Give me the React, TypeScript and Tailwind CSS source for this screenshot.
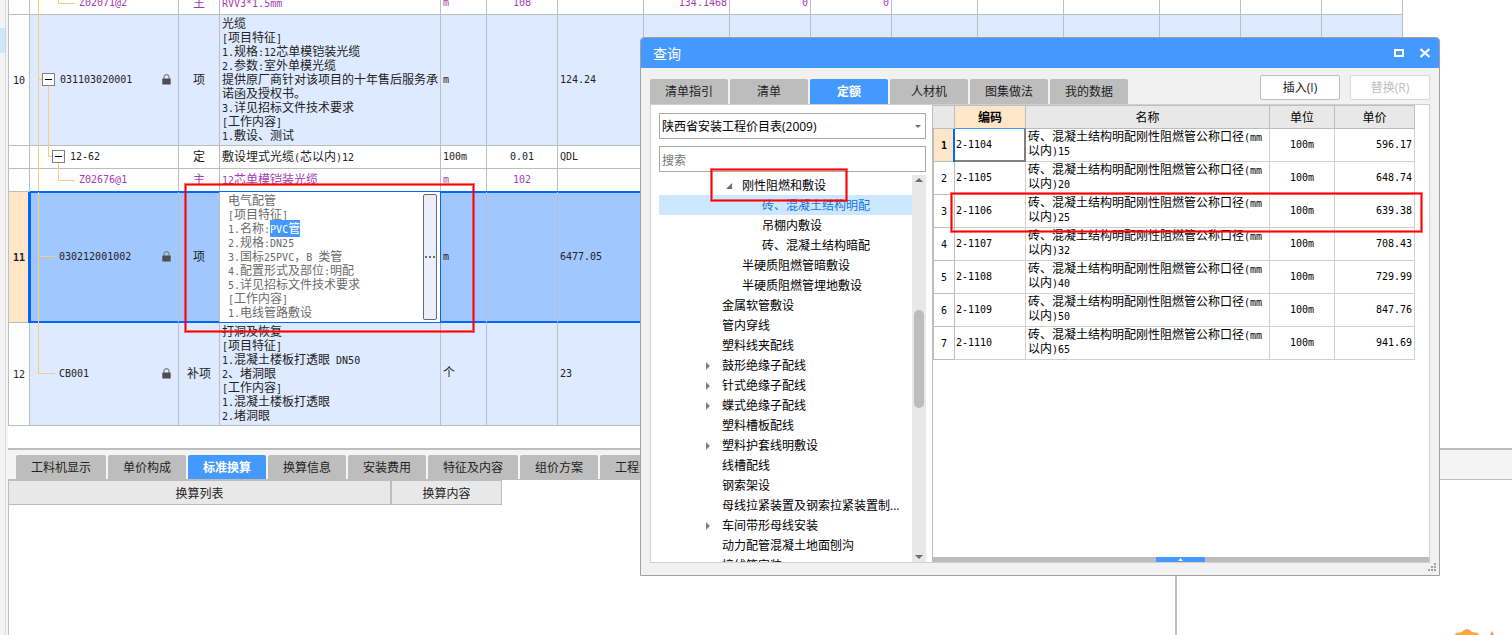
import { ReactNode } from 'react';
import { clsx } from 'clsx';

interface BillRow {
  no?: string;
  code: string;
  type: string;
  name: string[];
  unit: string;
  qty?: string;
  expr?: string;
  extra?: string[];
  kind: 'item' | 'quota' | 'material';
  height: string;
  locked?: boolean;
  editing?: boolean;
}

const billRows: BillRow[] = [
  { code: 'Z02071@2', type: '主', name: ['RVV3*1.5mm'], unit: 'm', qty: '108', extra: ['134.1468', '0', '0'], kind: 'material', height: 'h-[23px]' },
  {
    no: '10',
    code: '031103020001',
    type: '项',
    name: [
      '光缆',
      '[项目特征]',
      '1.规格:12芯单模铠装光缆',
      '2.参数:室外单模光缆',
      '提供原厂商针对该项目的十年售后服务承',
      '诺函及授权书。',
      '3.详见招标文件技术要求',
      '[工作内容]',
      '1.敷设、测试',
    ],
    unit: 'm',
    expr: '124.24',
    kind: 'item',
    height: 'h-[131px]',
    locked: true,
  },
  { code: '12-62', type: '定', name: ['敷设埋式光缆(芯以内)12'], unit: '100m', qty: '0.01', expr: 'QDL', kind: 'quota', height: 'h-[23px]' },
  { code: 'Z02676@1', type: '主', name: ['12芯单模铠装光缆'], unit: 'm', qty: '102', kind: 'material', height: 'h-[23px]' },
  { no: '11', code: '030212001002', type: '项', name: [], unit: 'm', expr: '6477.05', kind: 'item', height: 'h-[131px]', locked: true, editing: true },
  {
    no: '12',
    code: 'CB001',
    type: '补项',
    name: ['打洞及恢复', '[项目特征]', '1.混凝土楼板打透眼 DN50', '2、堵洞眼', '[工作内容]', '1.混凝土楼板打透眼', '2.堵洞眼'],
    unit: '个',
    expr: '23',
    kind: 'item',
    height: 'h-[103px]',
    locked: true,
  },
];

const editorLines = ['2.规格:DN25', '3.国标25PVC，B 类管', '4.配置形式及部位:明配', '5.详见招标文件技术要求', '[工作内容]', '1.电线管路敷设'];

const detailTabs = ['工料机显示', '单价构成', '标准换算', '换算信息', '安装费用', '特征及内容', '组价方案', '工程量明细'];

const queryTabs = ['清单指引', '清单', '定额', '人材机', '图集做法', '我的数据'];

interface TreeNode {
  label: string;
  level: 1 | 2 | 3;
  state?: 'open' | 'closed';
  selected?: boolean;
}

const treeNodes: TreeNode[] = [
  { label: '刚性阻燃和敷设', level: 2, state: 'open' },
  { label: '砖、混凝土结构明配', level: 3, selected: true },
  { label: '吊棚内敷设', level: 3 },
  { label: '砖、混凝土结构暗配', level: 3 },
  { label: '半硬质阻燃管暗敷设', level: 2 },
  { label: '半硬质阻燃管埋地敷设', level: 2 },
  { label: '金属软管敷设', level: 1 },
  { label: '管内穿线', level: 1 },
  { label: '塑料线夹配线', level: 1 },
  { label: '鼓形绝缘子配线', level: 1, state: 'closed' },
  { label: '针式绝缘子配线', level: 1, state: 'closed' },
  { label: '蝶式绝缘子配线', level: 1, state: 'closed' },
  { label: '塑料槽板配线', level: 1 },
  { label: '塑料护套线明敷设', level: 1, state: 'closed' },
  { label: '线槽配线', level: 1 },
  { label: '钢索架设', level: 1 },
  { label: '母线拉紧装置及钢索拉紧装置制...', level: 1 },
  { label: '车间带形母线安装', level: 1, state: 'closed' },
  { label: '动力配管混凝土地面刨沟', level: 1 },
  { label: '接线箱安装', level: 1 },
];

const quotas = [
  { code: '2-1104', size: '15', price: '596.17' },
  { code: '2-1105', size: '20', price: '648.74' },
  { code: '2-1106', size: '25', price: '639.38' },
  { code: '2-1107', size: '32', price: '708.43' },
  { code: '2-1108', size: '40', price: '729.99' },
  { code: '2-1109', size: '50', price: '847.76' },
  { code: '2-1110', size: '65', price: '941.69' },
];

// Half-width runs are set in a monospace face so two of them fill one hanzi.
function Mono({ children }: { children: string }) {
  return (
    <>
      {children.split(/([\x20-\x7e]+)/).map((run, i) =>
        i % 2 ? (
          <span key={i} className="whitespace-pre font-['DejaVu_Sans_Mono',monospace] text-[10px] leading-none">
            {run}
          </span>
        ) : (
          run
        ),
      )}
    </>
  );
}

function LockIcon() {
  return (
    <svg width="9" height="11" viewBox="0 0 9 11" className="shrink-0">
      <path d="M2 5V3.2a2.5 2.5 0 0 1 5 0V5" fill="none" stroke="#808080" strokeWidth="1.2" />
      <rect x="0.3" y="4.6" width="8.4" height="6" rx="0.6" fill="#4f4f4f" />
    </svg>
  );
}

function Toggle() {
  return (
    <button aria-label="折叠" className="relative flex h-[13px] w-[13px] shrink-0 items-center justify-center border border-[#808080] bg-white">
      <span className="h-px w-[7px] bg-black" />
    </button>
  );
}

function Branch({ className }: { className: string }) {
  return <span className={clsx('absolute border-[#ffc880]', className)} />;
}

function CodeCell({ row, index }: { row: BillRow; index: number }) {
  return (
    <>
      {index < 5 ? <Branch className="left-2 top-0 -bottom-px border-l" /> : <Branch className="left-2 top-0 h-[51px] w-[17px] border-b border-l" />}
      {row.code === '031103020001' && (
        <>
          <Branch className="left-2 top-[64px] w-1 border-t" />
          <Branch className="left-[18px] top-[70px] -bottom-px border-l" />
        </>
      )}
      {row.kind === 'quota' && (
        <>
          <Branch className="left-[18px] top-0 h-[11px] w-1 border-b border-l" />
          <Branch className="left-7 top-[17px] -bottom-px border-l" />
        </>
      )}
      {row.kind === 'material' && <Branch className="left-7 top-0 h-[12px] w-[17px] border-b border-l" />}
      {row.editing && <Branch className="left-2 top-[64px] w-[17px] border-t" />}
      <div
        className={clsx('relative flex items-center pr-[7px]', {
          'pl-3': row.code === '031103020001',
          'pl-[22px]': row.kind === 'quota',
          'pl-[49px]': row.kind === 'material',
          'pl-[29px]': row.kind === 'item' && row.code !== '031103020001',
        })}
      >
        {(row.code === '031103020001' || row.kind === 'quota') && (
          <span className="mr-[5px] flex">
            <Toggle />
          </span>
        )}
        <span className="flex-1">
          <Mono>{row.code}</Mono>
        </span>
        {row.locked && <LockIcon />}
      </div>
    </>
  );
}

function NameEditor() {
  return (
    <div className="flex h-[128px] items-stretch justify-between bg-white pr-[3px] pl-2 text-[#6b6b6b]">
      <div role="textbox" aria-label="名称" className="self-center">
        <p>电气配管</p>
        <p>
          <Mono>[项目特征]</Mono>
        </p>
        <p>
          <Mono>1.名称:</Mono>
          <span className="bg-[#4499ff] text-white">
            <Mono>PVC管</Mono>
          </span>
        </p>
        {editorLines.map((line) => (
          <p key={line}>
            <Mono>{line}</Mono>
          </p>
        ))}
      </div>
      <button aria-label="更多" className="my-px flex w-[14px] items-center justify-center gap-[2px] rounded-[2px] border border-[#6b6b6b] bg-[#eceffa]">
        <span className="h-[2px] w-[2px] bg-[#6b6b6b]" />
        <span className="h-[2px] w-[2px] bg-[#6b6b6b]" />
        <span className="h-[2px] w-[2px] bg-[#6b6b6b]" />
      </button>
    </div>
  );
}

function BillTable() {
  const cell = 'relative border-r border-b px-0 pt-0';
  return (
    <table className="-mt-2 w-[1395px] table-fixed border-separate border-spacing-0 text-xs leading-[14px] whitespace-nowrap text-[#222]">
      <colgroup>
        <col className="w-[22px]" />
        <col className="w-[149px]" />
        <col className="w-[41px]" />
        <col className="w-[221px]" />
        <col className="w-[46px]" />
        <col className="w-[71px]" />
        <col className="w-[86px]" />
        <col className="w-[86px]" />
        <col className="w-[81px]" />
        <col className="w-[81px]" />
        <col className="w-[86px]" />
        <col className="w-[86px]" />
        <col className="w-[96px]" />
        <col className="w-[81px]" />
        <col className="w-[81px]" />
        <col className="w-[81px]" />
      </colgroup>
      <tbody>
        {billRows.map((row, index) => {
          const tone = clsx(
            cell,
            row.editing
              ? 'border-r-[#bdbdbd] border-b-[#0066ff] bg-[#a0c8ff]'
              : 'border-[#bdbdbd]',
            row.kind === 'item' && !row.editing && 'bg-[#deeaff]',
            row.kind === 'material' && 'text-[#a43cb4]',
          );
          const band = row.editing && 'shadow-[0_-1px_0_#0066ff,inset_0_1px_0_#0066ff,inset_0_-1px_0_#0066ff]';
          return (
            <tr key={row.code} className={row.height}>
              <th
                scope="row"
                className={clsx(cell, 'border-l border-[#bdbdbd] pb-0 text-center', row.editing ? 'bg-[#ffe6c8] font-bold' : 'font-normal')}
              >
                <Mono>{row.no ?? ''}</Mono>
              </th>
              <td
                className={clsx(
                  tone,
                  'pb-0.5',
                  row.editing && 'shadow-[-2px_0_0_#0066ff,0_-1px_0_#0066ff,inset_1px_1px_0_#0066ff,inset_0_-1px_0_#0066ff]',
                )}
              >
                <CodeCell row={row} index={index} />
              </td>
              <td className={clsx(tone, band, 'pb-0 text-center', row.editing && 'border-r-[#0066ff]')}>{row.type}</td>
              {row.editing ? (
                <td className={clsx(cell, 'border-[#0066ff] bg-white pb-0 shadow-[0_-1px_0_#0066ff]')}>
                  <NameEditor />
                </td>
              ) : (
                <td className={clsx(tone, 'pb-0 pl-0.5')}>
                  {row.name.map((line, i) => (
                    <p key={i}>
                      <Mono>{line}</Mono>
                    </p>
                  ))}
                </td>
              )}
              <td className={clsx(tone, band, 'pb-0.5 pl-0.5')}>
                <Mono>{row.unit}</Mono>
              </td>
              <td className={clsx(tone, band, 'pb-0.5 text-center')}>
                <Mono>{row.qty ?? ''}</Mono>
              </td>
              <td className={clsx(tone, band, 'pb-0.5 pl-0.5')}>
                <Mono>{row.expr ?? ''}</Mono>
              </td>
              {Array.from({ length: 9 }, (_, i) => (
                <td key={i} className={clsx(tone, band, 'pr-0.5 pb-0.5 text-right')}>
                  <Mono>{row.extra?.[i] ?? ''}</Mono>
                </td>
              ))}
            </tr>
          );
        })}
      </tbody>
    </table>
  );
}

function DetailPane() {
  return (
    <section className="flex flex-1 flex-col border-t-2 border-[#bdbdbd]">
      <div className="flex h-[30px] items-end gap-[2px] border-b border-[#bdbdbd] bg-[#f4f4f4] pl-2">
        {detailTabs.map((tab) => (
          <button
            key={tab}
            className={clsx(
              'h-[24px] rounded-t-[2px] px-[15px] pt-0.5 text-xs whitespace-nowrap',
              tab === '标准换算' ? 'bg-[#4499ff] font-bold text-white' : 'bg-[#bdbdbd] text-[#222]',
            )}
          >
            {tab}
          </button>
        ))}
      </div>
      <div className="flex flex-1">
        <div className="flex-1 border-l border-[#bdbdbd]">
          <table className="table-fixed border-separate border-spacing-0 border-t border-[#bdbdbd] text-xs text-[#222]">
            <thead>
              <tr className="h-[24px]">
                <th className="w-[383px] border-r-2 border-b border-[#bdbdbd] bg-[#e8e8e8] px-0 pt-0.5 pb-0 font-normal">换算列表</th>
                <th className="w-[110px] border-r border-b border-[#bdbdbd] bg-[#e8e8e8] px-0 pt-0.5 pb-0 font-normal">换算内容</th>
              </tr>
            </thead>
          </table>
        </div>
        <div className="w-[337px] border-l-2 border-[#bdbdbd]" />
      </div>
    </section>
  );
}

function TreeArrow({ state }: { state?: 'open' | 'closed' }) {
  if (state === 'open') {
    return (
      <svg width="16" height="8" viewBox="0 0 16 8">
        <path d="M6 1v6H0z" fill="#6e6e6e" />
      </svg>
    );
  }
  return (
    <svg width="16" height="8" viewBox="0 0 16 8">
      {state === 'closed' && <path d="M0 0l4 4-4 4z" fill="#808080" />}
    </svg>
  );
}

function QuotaTree() {
  return (
    <div className="mt-[3px] flex min-h-0 flex-1">
      <ul className="min-w-0 flex-1 overflow-hidden text-xs leading-[18px] whitespace-nowrap text-black">
        {treeNodes.map((node) => (
          <li
            key={node.label}
            className={clsx('flex h-5 items-center pt-0.5', {
              'pl-[47px]': node.level === 1,
              'pl-[67px]': node.level === 2,
              'pl-[87px]': node.level === 3,
              'bg-[#cce8ff] text-[#1a73e8]': node.selected,
            })}
          >
            <TreeArrow state={node.state} />
            {node.label}
          </li>
        ))}
      </ul>
      <div className="flex w-[14px] flex-col items-center justify-between bg-[#e8e8e8] py-[3px]">
        <svg width="8" height="4" viewBox="0 0 8 4">
          <path d="M0 4l4-4 4 4z" fill="#6e6e6e" />
        </svg>
        <div className="mt-[128px] h-[98px] w-[10px] rounded-full bg-[#bdbdbd]" />
        <svg width="8" height="4" viewBox="0 0 8 4" className="mt-auto">
          <path d="M0 0l4 4 4-4z" fill="#6e6e6e" />
        </svg>
      </div>
    </div>
  );
}

function HeadCell({ children, className }: { children?: ReactNode; className?: string }) {
  return (
    <th className={clsx('border-t border-r border-b border-[#bdbdbd] px-0 pt-0.5 pb-0', className ?? 'bg-[#e8e8e8] font-normal')}>
      {children}
    </th>
  );
}

function QuotaTable() {
  const cell = 'border-r border-b border-[#d0d0d0] px-0 pt-0';
  return (
    <table className="w-[482px] table-fixed border-separate border-spacing-0 text-xs leading-[14px] text-black">
      <colgroup>
        <col className="w-[22px]" />
        <col className="w-[71px]" />
        <col className="w-[244px]" />
        <col className="w-[65px]" />
        <col className="w-[80px]" />
      </colgroup>
      <thead>
        <tr className="h-[24px]">
          <HeadCell />
          <HeadCell className="bg-[#ffe6c8] font-bold">编码</HeadCell>
          <HeadCell>名称</HeadCell>
          <HeadCell>单位</HeadCell>
          <HeadCell>单价</HeadCell>
        </tr>
      </thead>
      <tbody>
        {quotas.map((quota, i) => (
          <tr key={quota.code} className="h-[33px]">
            <th
              scope="row"
              className={clsx('border-r border-b border-l border-[#bdbdbd] p-0 text-center', i === 0 ? 'bg-[#ffe6c8] font-bold' : 'font-normal')}
            >
              <Mono>{String(i + 1)}</Mono>
            </th>
            <td
              className={clsx(
                cell,
                'pb-0.5 pl-px',
                i === 0 && 'border-r-[#808080] border-b-[#808080] shadow-[-2px_0_0_#0066ff,0_-1px_0_#4499ff,inset_-1px_-1px_0_#808080]',
              )}
            >
              <Mono>{quota.code}</Mono>
            </td>
            <td className={clsx(cell, 'pb-0.5 pl-0.5 whitespace-nowrap')}>
              <Mono>砖、混凝土结构明配刚性阻燃管公称口径(mm</Mono>
              <br />
              <Mono>{`以内)${quota.size}`}</Mono>
            </td>
            <td className={clsx(cell, 'pb-0.5 text-center')}>
              <Mono>100m</Mono>
            </td>
            <td className={clsx(cell, 'pr-0.5 pb-0.5 text-right')}>
              <Mono>{quota.price}</Mono>
            </td>
          </tr>
        ))}
      </tbody>
    </table>
  );
}

function QueryDialog() {
  return (
    <div
      role="dialog"
      aria-label="查询"
      className="absolute top-[37px] left-[640px] flex h-[539px] w-[800px] flex-col overflow-hidden rounded-t-[4px] border border-[#a0a0a0] bg-[#f1f1f1]"
    >
      <header className="flex h-[30px] shrink-0 items-center justify-between bg-[#4499ff] pr-2 pl-3 text-white">
        <h2 className="pt-0.5 text-sm">查询</h2>
        <div className="flex items-center gap-[15px]">
          <button aria-label="最大化">
            <svg width="10" height="8" viewBox="0 0 10 8" className="block">
              <path d="M1 1h8v6H1z" fill="none" stroke="#fff" strokeWidth="2" />
            </svg>
          </button>
          <button aria-label="关闭">
            <svg width="12" height="10" viewBox="0 0 12 10" className="block">
              <path d="M1.5 1l9 8M10.5 1l-9 8" stroke="#fff" strokeWidth="2.2" />
            </svg>
          </button>
        </div>
      </header>

      <div className="flex h-[36px] shrink-0 items-end justify-between px-[9px]">
        <div className="flex gap-[2px]">
          {queryTabs.map((tab) => (
            <button
              key={tab}
              className={clsx(
                'h-[25px] w-[78px] rounded-t-[2px] text-xs',
                tab === '定额' ? 'bg-[#4499ff] font-bold text-white' : 'bg-[#bdbdbd] text-[#222]',
              )}
            >
              {tab}
            </button>
          ))}
        </div>
        <div className="mb-1 flex gap-[10px] text-xs">
          <button className="h-[25px] w-[80px] rounded-[2px] border border-[#bdbdbd] bg-white text-[#222]">插入(I)</button>
          <button disabled className="h-[25px] w-[80px] rounded-[2px] border border-[#d8d8d8] bg-white text-[#bdbdbd]">
            替换(R)
          </button>
        </div>
      </div>

      <div className="mx-[9px] mb-3 flex min-h-0 flex-1 border border-[#d0d0d0] bg-white">
        <div className="flex w-[281px] flex-col pt-2 pr-[6px] pl-2">
          <div className="relative">
            <select
              aria-label="定额库"
              className="block h-[26px] w-full appearance-none border border-[#a9a9a9] bg-white px-0.5 pt-0.5 text-xs text-black"
            >
              <option>陕西省安装工程价目表(2009)</option>
            </select>
            <svg width="6" height="3" viewBox="0 0 6 3" className="pointer-events-none absolute top-3 right-[5px]">
              <path d="M0 0h6L3 3z" fill="#6e6e6e" />
            </svg>
          </div>
          <input
            aria-label="搜索"
            placeholder="搜索"
            className="mt-[7px] block h-[26px] w-full shrink-0 border border-[#a9a9a9] px-0.5 pt-0.5 text-xs placeholder:text-[#757575]"
          />
          <QuotaTree />
        </div>
        <div className="flex min-w-0 flex-1 flex-col border-l border-[#bdbdbd]">
          <div className="flex-1">
            <QuotaTable />
          </div>
          <button aria-label="展开" className="flex h-[5px] justify-center bg-[#bdbdbd] pr-px">
            <span className="flex h-[5px] w-[49px] items-center justify-center bg-[#4499ff]">
              <svg width="5" height="3" viewBox="0 0 5 3">
                <path d="M0 3h5L2.5 0z" fill="#fff" />
              </svg>
            </span>
          </button>
        </div>
      </div>

      <svg width="8" height="8" viewBox="0 0 8 8" className="absolute right-[3px] bottom-1" fill="#a0a0a0">
        <path d="M6 0h2v2H6zM3 3h2v2H3zM6 3h2v2H6zM0 6h2v2H0zM3 6h2v2H3zM6 6h2v2H6z" />
      </svg>
    </div>
  );
}

function RedMark({ className }: { className: string }) {
  return (
    <div
      className={clsx(
        'pointer-events-none absolute border border-[#ff0000] shadow-[0_0_0_1px_#ff000090,inset_0_0_0_1px_#ff000090]',
        className,
      )}
    />
  );
}

export default function App() {
  return (
    <div className="relative flex h-screen w-full overflow-hidden bg-white font-['Open_Sans','Noto_Sans_CJK_SC',sans-serif]">
      <aside className="w-2 shrink-0 bg-[#f4f4f4]">
        <div className="h-full w-[6px] border-r border-[#d8d8d8] pt-7">
          <div className="h-[25px] bg-[#cce8ff]" />
        </div>
      </aside>
      <main className="flex min-w-0 flex-1 flex-col overflow-hidden">
        <div className="pb-[22px]">
          <BillTable />
        </div>
        <DetailPane />
      </main>

      <QueryDialog />

      <RedMark className="top-[184px] left-[185px] h-[148px] w-[289px]" />
      <RedMark className="top-[169px] left-[711px] h-[32px] w-[136px]" />
      <RedMark className="top-[193px] left-[951px] h-[39px] w-[471px]" />

      <svg width="40" height="6" viewBox="0 0 40 6" className="absolute right-[17px] bottom-0">
        <path d="M0 6l1-2 6-1 2-2 3-1 3 1 2 2 6 1 1 2z" fill="#ffa63c" />
        <path d="M35.500 6l1-3 .500-1 .500 1 1 3z" fill="#f58a3c" />
      </svg>
    </div>
  );
}
